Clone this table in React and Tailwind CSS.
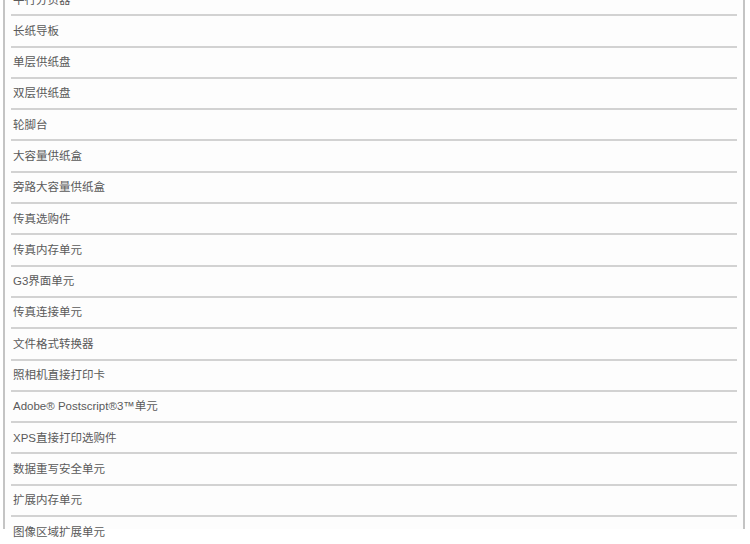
const items = [
  "平行分页器",
  "长纸导板",
  "单层供纸盘",
  "双层供纸盘",
  "轮脚台",
  "大容量供纸盒",
  "旁路大容量供纸盒",
  "传真选购件",
  "传真内存单元",
  "G3界面单元",
  "传真连接单元",
  "文件格式转换器",
  "照相机直接打印卡",
  "Adobe® Postscript®3™单元",
  "XPS直接打印选购件",
  "数据重写安全单元",
  "扩展内存单元",
  "图像区域扩展单元",
];

export default function App() {
  return (
    <div className="h-[544px] w-[750px] overflow-hidden bg-white">
      <div className="ml-[3px] h-full w-[742px] border-x-2 border-[#c4c4c4] bg-[#fdfdfd] px-[6px]">
        <ul className="mt-[-15px]">
          {items.map((name) => (
            <li
              key={name}
              className="flex h-[31.3px] items-center border-b-2 border-[#d2d2d2] px-[2px] pt-[1px] text-[11.5px] text-[#5a5a5a] font-['Liberation_Sans','Noto_Sans_CJK_SC',sans-serif]"
            >
              {name}
            </li>
          ))}
        </ul>
      </div>
    </div>
  );
}
